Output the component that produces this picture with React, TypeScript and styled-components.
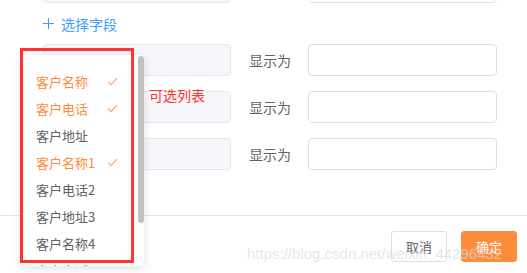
import React from "react";
import styled, { createGlobalStyle } from "styled-components";

const GlobalStyle = createGlobalStyle`
  html, body {
    margin: 0;
    padding: 0;
    background: #fff;
    font-family: "Noto Sans CJK SC", "Noto Sans", sans-serif;
  }
`;

const options = [
  { label: "客户名称", checked: true },
  { label: "客户电话", checked: true },
  { label: "客户地址", checked: false },
  { label: "客户名称1", checked: true },
  { label: "客户电话2", checked: false },
  { label: "客户地址3", checked: false },
  { label: "客户名称4", checked: false },
  { label: "客户电话5", checked: false },
];

const Check = () => (
  <svg width="11" height="9" viewBox="0 0 11 9" fill="none">
    <path d="M1 4.6 L4 7.6 L10 1.2" stroke="#f8a56a" strokeWidth="1.1" />
  </svg>
);

const Plus = () => (
  <svg width="11" height="11" viewBox="0 0 11 11" fill="none">
    <path d="M5.5 0 V11 M0 5.5 H11" stroke="#409eff" strokeWidth="1.1" />
  </svg>
);

const App: React.FC = () => {
  return (
    <Page>
      <GlobalStyle />
      <Body>
        <FieldRow $first>
          <SelectBox />
          <Label />
          <TextBox />
        </FieldRow>
        <AddLink>
          <Plus />
          <span>选择字段</span>
        </AddLink>
        <Rows>
          {[0, 1, 2].map((i) => (
            <FieldRow key={i}>
              <SelectBox>
                <Placeholder>客户名称</Placeholder>
              </SelectBox>
              <Label>显示为</Label>
              <TextBox />
            </FieldRow>
          ))}
        </Rows>
      </Body>
      <Footer>
        <Button>取消</Button>
        <Button $primary>确定</Button>
      </Footer>

      <Dropdown>
        {options.map((o) => (
          <Option key={o.label} $active={o.checked}>
            <span>{o.label}</span>
            {o.checked && <Check />}
          </Option>
        ))}
        <ScrollThumb />
      </Dropdown>
      <Highlight />
      <Note>可选列表</Note>
      <Watermark>https://blog.csdn.net/weixin_44296432</Watermark>
    </Page>
  );
};

export default App;

const Page = styled.div`
  position: relative;
  width: 527px;
  height: 273px;
  overflow: hidden;
  background: #fff;
`;

const Body = styled.div`
  display: flex;
  flex-direction: column;
  padding: 0 30px 0 43px;
  height: 216px;
  box-sizing: border-box;
  border-bottom: 1px solid #e4e7ed;
`;

const Rows = styled.div`
  display: flex;
  flex-direction: column;
  gap: 15px;
`;

const FieldRow = styled.div<{ $first?: boolean }>`
  display: flex;
  align-items: center;
  flex-shrink: 0;
  height: 32px;
  margin-top: ${(p) => (p.$first ? "-29px" : "0")};
`;

const SelectBox = styled.div`
  width: 188px;
  height: 32px;
  box-sizing: border-box;
  background: #f5f7fa;
  border: 1px solid #e4e7ed;
  border-radius: 4px;
  display: flex;
  align-items: center;
  padding-left: 12px;
`;

const Placeholder = styled.span`
  font-size: 13px;
  color: #c0c4cc;
`;

const Label = styled.div`
  width: 77px;
  padding-left: 18px;
  box-sizing: border-box;
  font-size: 14px;
  color: #606266;
`;

const TextBox = styled.div`
  width: 189px;
  height: 32px;
  box-sizing: border-box;
  border: 1px solid #dcdfe6;
  border-radius: 4px;
  background: #fff;
`;

const AddLink = styled.div`
  height: 41px;
  flex-shrink: 0;
  display: flex;
  align-items: center;
  gap: 7px;
  color: #409eff;
  font-size: 14px;
`;

const Footer = styled.div`
  display: flex;
  justify-content: flex-end;
  gap: 14px;
  padding: 15px 10px 0 0;
`;

const Button = styled.div<{ $primary?: boolean }>`
  width: 56px;
  height: 31px;
  box-sizing: border-box;
  border-radius: 3px;
  display: flex;
  align-items: center;
  justify-content: center;
  font-size: 13px;
  color: ${(p) => (p.$primary ? "#fff" : "#606266")};
  background: ${(p) => (p.$primary ? "#ff8c3a" : "#fff")};
  border: 1px solid ${(p) => (p.$primary ? "#ff8c3a" : "#dcdfe6")};
`;

const Dropdown = styled.div`
  position: absolute;
  left: 21px;
  top: 55px;
  width: 123px;
  height: 211px;
  box-sizing: border-box;
  padding-top: 13px;
  background: #fff;
  border-radius: 4px;
  box-shadow: 0 2px 10px rgba(0, 0, 0, 0.12);
  overflow: hidden;
`;

const Option = styled.div<{ $active: boolean }>`
  height: 27px;
  display: flex;
  align-items: center;
  justify-content: space-between;
  padding: 0 26px 0 15px;
  font-size: 13px;
  color: ${(p) => (p.$active ? "#ff8c3a" : "#606266")};
`;

const ScrollThumb = styled.div`
  position: absolute;
  right: 0;
  top: 1px;
  width: 6px;
  height: 167px;
  border-radius: 3px;
  background: #c1c1c1;
`;

const Highlight = styled.div`
  position: absolute;
  left: 20px;
  top: 48px;
  width: 114px;
  height: 215px;
  box-sizing: border-box;
  border: 3px solid #ff3333;
`;

const Note = styled.div`
  position: absolute;
  left: 149px;
  top: 85px;
  font-size: 14px;
  color: #ff3333;
`;

const Watermark = styled.div`
  position: absolute;
  left: 247px;
  top: 245px;
  font-family: "Liberation Sans", Arial, sans-serif;
  font-size: 15px;
  color: rgba(220, 220, 220, 0.7);
  white-space: nowrap;
`;
